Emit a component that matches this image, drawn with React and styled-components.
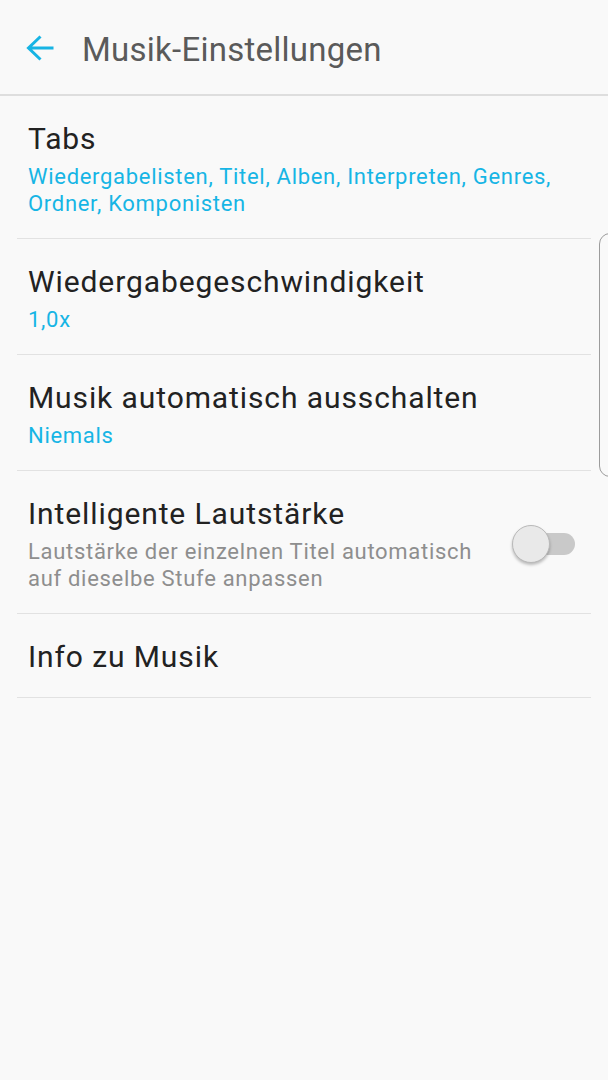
import React from "react";
import styled, { createGlobalStyle } from "styled-components";

const Global = createGlobalStyle`
  html, body { margin: 0; padding: 0; background: #f9f9f9; }
  body { font-family: Roboto, "Noto Sans", sans-serif; -webkit-font-smoothing: antialiased; }
`;

const Screen = styled.div`
  position: relative;
  width: 608px;
  height: 1080px;
  background: #f9f9f9;
  overflow: hidden;
`;

const Header = styled.header`
  display: flex;
  align-items: center;
  height: 94px;
  border-bottom: 2px solid #dedede;
  padding-left: 26px;
  box-sizing: content-box;
`;

const BackButton = styled.div`
  width: 30px;
  height: 30px;
  display: flex;
  align-items: center;
  justify-content: center;
  margin-right: 26px;
  margin-top: 1px;
`;

const HeaderTitle = styled.h1`
  margin: 6px 0 0;
  font-size: 33px;
  line-height: 40px;
  font-weight: 400;
  color: #5a5a5a;
  letter-spacing: 0.25px;
`;

const List = styled.div`
  display: flex;
  flex-direction: column;
  margin: 0 17px;
`;

const Row = styled.div`
  display: flex;
  align-items: center;
  padding: 24px 16px 21px 11px;
  border-bottom: 1px solid #e2e2e2;
`;

const RowText = styled.div`
  flex: 1;
  display: flex;
  flex-direction: column;
  max-width: ${(p) => (p.$narrow ? "472px" : "none")};
`;

const Title = styled.div`
  font-size: 30px;
  line-height: 38px;
  color: #222222;
  letter-spacing: 0.9px;
`;

const Sub = styled.div`
  margin-top: 5px;
  font-size: 22px;
  line-height: 27px;
  letter-spacing: 0.7px;
  color: ${(p) => (p.$muted ? "#8e8e8e" : "#16b5e5")};
`;

const Toggle = styled.div`
  position: relative;
  width: 64px;
  height: 40px;
  flex-shrink: 0;
  margin-left: auto;
`;

const Track = styled.div`
  position: absolute;
  left: 10px;
  right: 0;
  top: 9px;
  height: 22px;
  border-radius: 11px;
  background: #c9c9c9;
`;

const Thumb = styled.div`
  position: absolute;
  left: 1px;
  top: 1px;
  width: 36px;
  height: 36px;
  border-radius: 50%;
  background: #e9e9e9;
  border: 1px solid #b9b9b9;
  box-shadow: 0 2px 3px rgba(0, 0, 0, 0.25);
`;

const EdgeHandle = styled.div`
  position: absolute;
  left: 599px;
  top: 233px;
  width: 24px;
  height: 244px;
  border: 1.5px solid #9c9c9c;
  border-radius: 11px;
  box-sizing: border-box;
`;

const BackArrow = () => (
  <svg width="30" height="30" viewBox="0 0 30 30" fill="none">
    <path
      d="M27.5 15H3.5M14.5 3.5L2.5 15l12 11.5"
      stroke="#17b4e4"
      strokeWidth="3"
      strokeLinecap="butt"
      strokeLinejoin="miter"
    />
  </svg>
);

export default function App() {
  return (
    <Screen>
      <Global />
      <Header>
        <BackButton>
          <BackArrow />
        </BackButton>
        <HeaderTitle>Musik-Einstellungen</HeaderTitle>
      </Header>
      <List>
        <Row>
          <RowText>
            <Title>Tabs</Title>
            <Sub>
              Wiedergabelisten, Titel, Alben, Interpreten, Genres,
              <br />
              Ordner, Komponisten
            </Sub>
          </RowText>
        </Row>
        <Row>
          <RowText>
            <Title>Wiedergabegeschwindigkeit</Title>
            <Sub>1,0x</Sub>
          </RowText>
        </Row>
        <Row>
          <RowText>
            <Title>Musik automatisch ausschalten</Title>
            <Sub>Niemals</Sub>
          </RowText>
        </Row>
        <Row>
          <RowText $narrow>
            <Title>Intelligente Lautstärke</Title>
            <Sub $muted>
              Lautstärke der einzelnen Titel automatisch
              <br />
              auf dieselbe Stufe anpassen
            </Sub>
          </RowText>
          <Toggle>
            <Track />
            <Thumb />
          </Toggle>
        </Row>
        <Row>
          <RowText>
            <Title>Info zu Musik</Title>
          </RowText>
        </Row>
      </List>
      <EdgeHandle />
    </Screen>
  );
}
